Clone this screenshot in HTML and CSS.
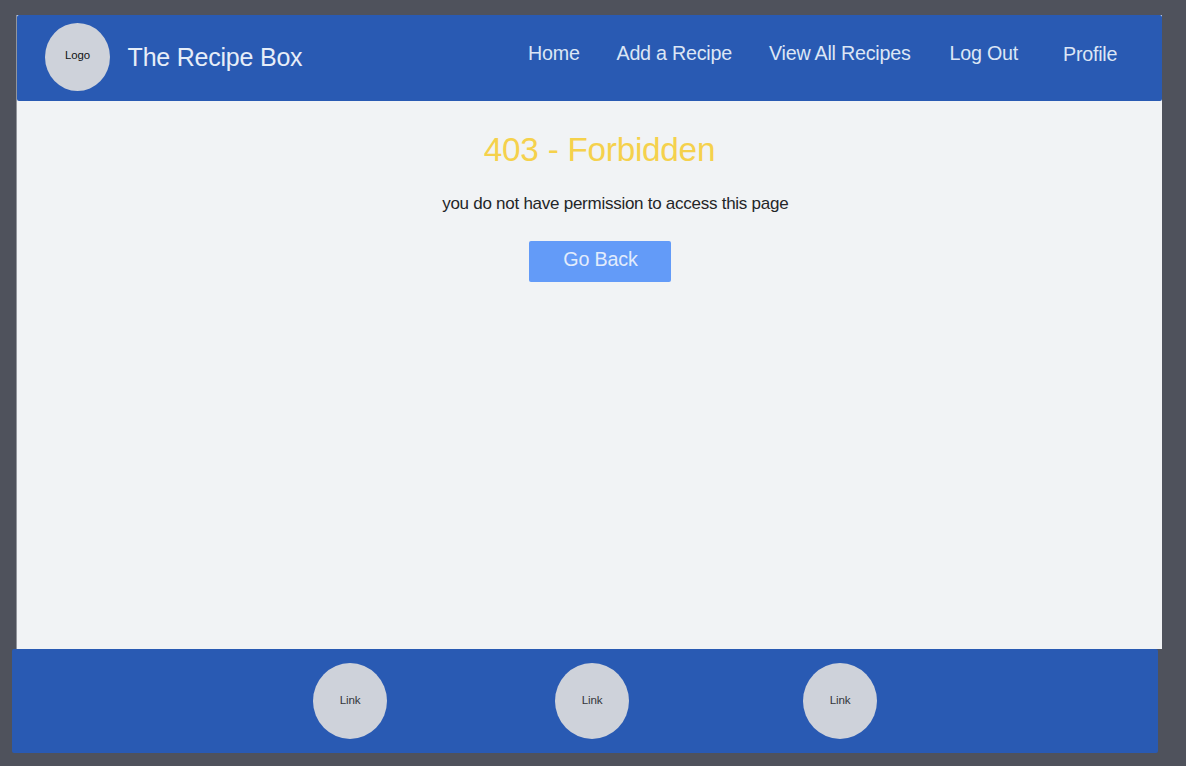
FILE: index.html
```html
<!DOCTYPE html>
<html lang="en">
<head>
<meta charset="utf-8">
<title>The Recipe Box</title>
<link rel="stylesheet" href="styles.css">
</head>
<body>
<div class="page">
  <header class="header">
    <div class="logo">Logo</div>
    <div class="brand">The Recipe Box</div>
    <nav class="nav">
      <a>Home</a>
      <a>Add a Recipe</a>
      <a>View All Recipes</a>
      <a>Log Out</a>
      <a class="profile">Profile</a>
    </nav>
  </header>
  <main class="main">
    <h1 class="title">403 - Forbidden</h1>
    <p class="message">you do not have permission to access this page</p>
    <button class="back">Go Back</button>
  </main>
</div>
<footer class="footer">
  <a class="link">Link</a>
  <a class="link">Link</a>
  <a class="link">Link</a>
</footer>
</body>
</html>
```
FILE: styles.css
```css
* { box-sizing: border-box; }
body {
  margin: 0;
  height: 766px;
  padding: 15px 24px 0 12px;
  overflow: hidden;
  background: #4f525c;
  font-family: "Liberation Sans", Arial, sans-serif;
  white-space: nowrap;
}
.page {
  width: 1146px;
  height: 634px;
  margin-left: 4px;
  border-left: 1px solid #92959c;
  background: #f1f3f5;
}
.header {
  display: flex;
  height: 86px;
  padding: 8px 0 0 28px;
  border-radius: 2px;
  background: #295ab3;
  color: #e6edf8;
}
.logo, .link {
  display: flex;
  align-items: center;
  justify-content: center;
  border-radius: 50%;
  background: #ced2da;
}
.logo {
  width: 65px;
  height: 68px;
  padding-bottom: 4px;
  font-size: 11.4px;
  letter-spacing: -0.1px;
  color: #101214;
}
.brand {
  width: 399px;
  padding: 20px 0 0 17.6px;
  font-size: 25px;
  letter-spacing: -0.22px;
  line-height: 28px;
}
.nav {
  display: grid;
  grid-template-columns: 88.5px 152.5px 180.5px 113.5px 80px;
  padding-top: 19px;
  margin-left: 19px;
  font-size: 19.7px;
  letter-spacing: -0.23px;
  line-height: 22px;
  color: #dce6f5;
}
.profile { padding-top: 1px; }
.main {
  display: flex;
  flex-direction: column;
  align-items: center;
  padding: 30px 0 0 20px;
}
.title {
  margin: 0;
  font-size: 33.3px;
  letter-spacing: -0.25px;
  font-weight: 400;
  line-height: 38px;
  color: #f5d14c;
}
.message {
  margin: 25px 0 0 31.5px;
  font-size: 17px;
  letter-spacing: -0.26px;
  line-height: 20px;
  color: #242628;
}
.back {
  width: 142.5px;
  height: 41px;
  margin: 27px 0 0 1px;
  padding: 0 0 4px 1px;
  border: 0;
  border-radius: 2px;
  background: #639bf8;
  font: 19.7px "Liberation Sans", Arial, sans-serif;
  letter-spacing: -0.15px;
  color: #e2ecfc;
}
.footer {
  display: flex;
  gap: 168px;
  width: 1146px;
  height: 104px;
  padding: 14px 0 0 301px;
  border-radius: 2px;
  background: #295ab3;
}
.link {
  width: 74px;
  height: 76px;
  padding-bottom: 4px;
  font-size: 11.6px;
  letter-spacing: -0.2px;
  color: #33363a;
}
.link:last-child { margin-left: 6px; }
```
